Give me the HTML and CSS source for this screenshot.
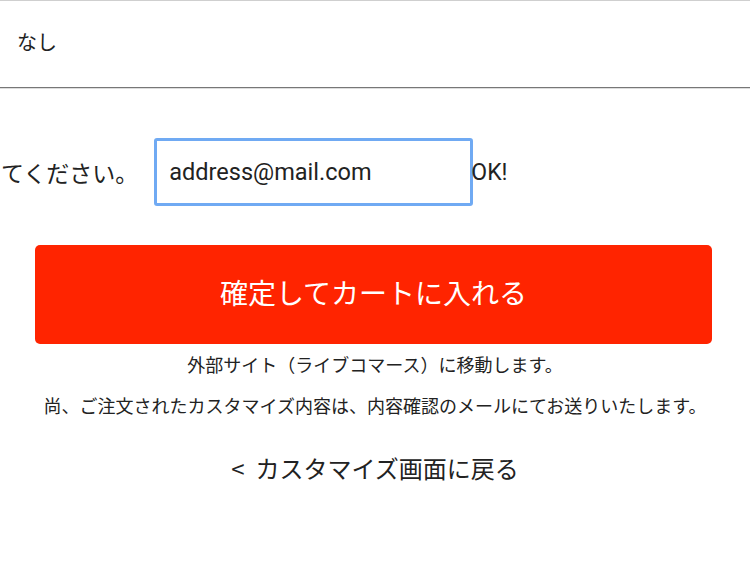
FILE: index.html
```html
<!DOCTYPE html>
<html lang="ja">
<head>
    <meta charset="UTF-8">
    <meta name="viewport" content="width=device-width, initial-scale=1.0">
    <title>注文確認</title>
    <link rel="stylesheet" href="styles.css">
</head>
<body>
    <div class="option-value">なし</div>

    <div class="mail-row">
        <span class="mail-label">てください。</span>
        <input class="mail-input" type="email" value="address@mail.com">
        <span class="mail-ok">OK!</span>
    </div>

    <button class="cart-btn">確定してカートに入れる</button>

    <div class="note">
        <p>外部サイト（ライブコマース）に移動します。</p>
        <p>尚、ご注文されたカスタマイズ内容は、内容確認のメールにてお送りいたします。</p>
    </div>

    <a class="back-link" href="#"><span class="back-arrow">&lt;</span>カスタマイズ画面に戻る</a>
</body>
</html>
```

FILE: styles.css
```css
body {
    margin: 0;
    font-family: "Noto Sans CJK JP", "Noto Sans", sans-serif;
    color: #222;
    background: #fff;
    overflow: hidden;
}
.option-value {
    display: flex;
    align-items: center;
    box-sizing: border-box;
    height: 88px;
    padding: 0 0 6px 17px;
    border-top: 1px solid #cfcfcf;
    border-bottom: 1px solid #777;
    box-shadow: 0 1px 0 #ddd;
    font-size: 20px;
}
.mail-row {
    display: flex;
    align-items: center;
    margin-top: 50px;
    white-space: nowrap;
}
.mail-label {
    flex-shrink: 0;
    margin-left: 1px;
    margin-right: 16px;
    font-size: 23px;
}
.mail-input {
    flex-shrink: 0;
    box-sizing: border-box;
    width: 319px;
    height: 68px;
    padding: 0 0 0 12px;
    border: 3px solid #70aaf3;
    border-radius: 3px;
    outline: none;
    font-family: Roboto, sans-serif;
    font-size: 23.5px;
    color: #222;
}
.mail-ok {
    margin-left: -2px;
    font-family: Roboto, sans-serif;
    font-size: 23px;
}
.cart-btn {
    display: block;
    width: calc(100% - 73px);
    height: 99px;
    margin: 39px 0 0 35px;
    padding: 0 0 5px;
    border: none;
    border-radius: 5px;
    background: #ff2400;
    color: #fff;
    font-family: "Noto Sans CJK JP", sans-serif;
    font-size: 28px;
    cursor: pointer;
}
.note {
    text-align: center;
    font-size: 18px;
    line-height: 41px;
}
.note p {
    margin: 0;
}
.back-link {
    display: block;
    margin-top: 26px;
    text-align: center;
    font-size: 24px;
    line-height: 32px;
    color: #222;
    text-decoration: none;
}
.back-arrow {
    margin-right: 11px;
}
```
